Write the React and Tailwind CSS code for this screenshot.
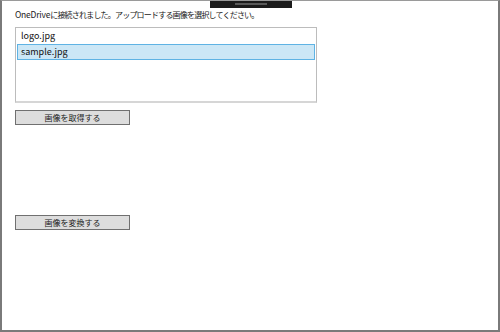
import React from "react";

const files = ["logo.jpg", "sample.jpg"];

const font = { fontFamily: '"Noto Sans CJK JP", "Noto Sans", sans-serif' };

const Button = ({ label }) => (
  <button className="flex h-[15px] w-[115px] items-center justify-center border border-[#707070] bg-[#dddddd] text-[8px] leading-none text-[#222]">
    {label}
  </button>
);

export default function App() {
  return (
    <div
      className="relative h-[332px] w-[500px] overflow-hidden border-t border-r-2 border-b-2 border-l-2 border-t-[#9a9a9a] border-r-[#7a7a7a] border-b-[#7a7a7a] border-l-[#7a7a7a] bg-white"
      style={font}
    >
      {/* window chrome strip on top */}
      <div className="absolute left-[208px] top-[-1px] flex h-[8px] w-[82px] items-center justify-center bg-[#1c1c1c]">
        <div className="h-[2px] w-[32px] bg-[#5a5a5a]" />
      </div>

      <div className="flex flex-col pl-[13px] pt-[7px]">
        <p className="h-[19px] text-[8px] leading-[12px] text-[#222]">
          <span className="text-[8.5px] tracking-[-0.2px]">OneDrive</span>
          <span className="tracking-[-0.8px]">
            に接続されました。アップロードする画像を選択してください。
          </span>
        </p>

        <div className="h-[76px] w-[302px] border border-[#bcbcbc] border-b-2 border-b-[#d6d6d6]">
          {files.map((f, i) => (
            <div
              key={f}
              className={
                i === 1
                  ? "mx-[1px] flex h-[16px] items-center border border-[#5fb3e4] bg-[#cce7f6] pl-[3px] text-[9px] text-[#111]"
                  : "mx-[1px] flex h-[16px] items-center border border-transparent pl-[3px] text-[9px] text-[#111]"
              }
            >
              {f}
            </div>
          ))}
        </div>

        <div className="mt-[7px]">
          <Button label="画像を取得する" />
        </div>

        <div className="mt-[90px]">
          <Button label="画像を変換する" />
        </div>
      </div>
    </div>
  );
}
